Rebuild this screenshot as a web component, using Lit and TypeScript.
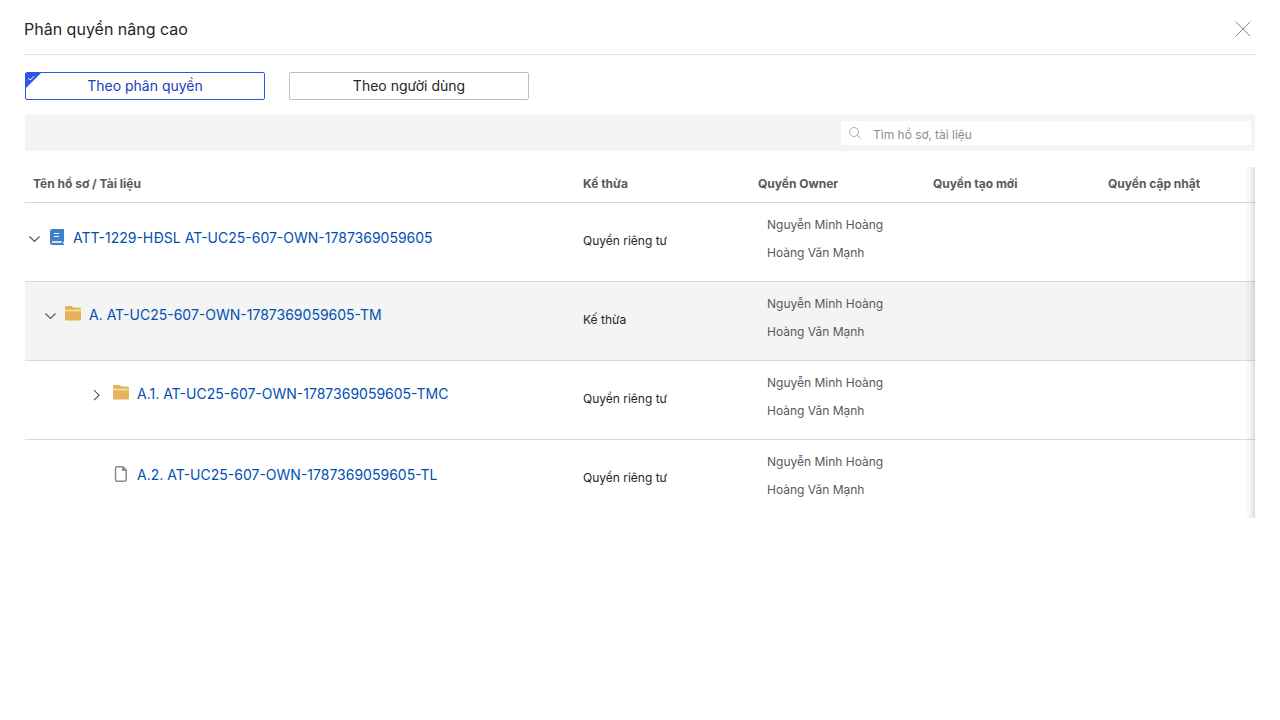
import { LitElement, html, css, svg, nothing } from "lit";
import { customElement, state } from "lit/decorators.js";
import { classMap } from "lit/directives/class-map.js";

type Kind = "book" | "folder" | "file";

interface Item {
  name: string;
  kind: Kind;
  level: number;
  expanded?: boolean;
  inherit: string;
  owners: string[];
  highlighted?: boolean;
}

const OWNERS = ["Nguyễn Minh Hoàng", "Hoàng Văn Mạnh"];

const ITEMS: Item[] = [
  { name: "ATT-1229-HĐSL AT-UC25-607-OWN-1787369059605", kind: "book", level: 0, expanded: true, inherit: "Quyền riêng tư", owners: OWNERS },
  { name: "A. AT-UC25-607-OWN-1787369059605-TM", kind: "folder", level: 1, expanded: true, inherit: "Kế thừa", owners: OWNERS, highlighted: true },
  { name: "A.1. AT-UC25-607-OWN-1787369059605-TMC", kind: "folder", level: 4, expanded: false, inherit: "Quyền riêng tư", owners: OWNERS },
  { name: "A.2. AT-UC25-607-OWN-1787369059605-TL", kind: "file", level: 4, inherit: "Quyền riêng tư", owners: OWNERS },
];

const ICONS = {
  book: svg`<path d="M3.500 0H14a1 1 0 0 1 1 1v11.500l-.7.5v1.700l.7.3v1H3.500A2.500 2.500 0 0 1 1 13.500v-11A2.500 2.500 0 0 1 3.500 0z" fill="#4080c8"/>
    <path d="M5 4.500h5M5 7.500h5" stroke="#fff"/><path d="M3.600 13h8.400" stroke="#fff" stroke-width="1.700" stroke-linecap="round"/>`,
  folder: svg`<path d="M1 1h5.500l2 1.500H15a1 1 0 0 1 1 1V14.600a1 1 0 0 1-1 1H1a1 1 0 0 1-1-1V2a1 1 0 0 1 1-1z" fill="#e6b35a"/>
    <path d="M0 5.500h16" stroke="#f4dcae" stroke-width="1.600"/>`,
  file: svg`<path d="M4 .75h6l3.250 3.250v9.750a1.500 1.500 0 0 1-1.500 1.500H4a1.500 1.500 0 0 1-1.500-1.500v-11.500A1.500 1.500 0 0 1 4 .75z" fill="#fff" stroke="#8a8a8a" stroke-width="1.500"/>
    <path d="M9 .500v4.500h4.500z" fill="#8a8a8a"/>`,
};

@customElement("app-root")
export class AppRoot extends LitElement {
  @state() private mode: "permission" | "user" = "permission";

  static styles = css`
    :host {
      display: block;
      padding: 0 24px;
      background: #fff;
      color: #262626;
      font: 12px/20px Inter, "Noto Sans", sans-serif;
      font-optical-sizing: none;
    }
    * { box-sizing: border-box; }
    svg { display: block; flex: none; }
    button { font: inherit; color: inherit; background: none; border: 0; padding: 0; cursor: pointer; }
    .header {
      display: flex;
      align-items: center;
      justify-content: space-between;
      padding: 16px 5px 12px 0;
      border-bottom: 1px solid #dfe3ec;
    }
    .title { margin: 0; font-size: 16px; line-height: 26px; font-weight: 400; }
    .body { padding: 17px 1px 0; }
    .modes { display: flex; gap: 24px; }
    .mode {
      position: relative;
      width: 240px;
      height: 28px;
      border: 1px solid #bfbfbf;
      border-radius: 2px;
      font-size: 14px;
      overflow: hidden;
    }
    .mode.active { border-color: #2f54eb; color: #1d39c4; }
    .mark { position: absolute; top: 0; left: 0; }
    .toolbar {
      display: flex;
      justify-content: flex-end;
      margin: 15px 0 16px;
      padding: 6px 4px;
      background: #f4f4f4;
    }
    .search {
      display: flex;
      align-items: center;
      gap: 12px;
      width: 410px;
      height: 24px;
      padding: 0 8px;
      border-radius: 2px;
      background: #fff;
    }
    .query { flex: 1; min-width: 0; height: 24px; border: 0; outline: 0; padding: 2px 0 0; font: inherit; background: none; }
    .query::placeholder { color: #8c8c8c; opacity: 1; }
    .frame { position: relative; overflow: hidden; }
    .frame::after {
      content: "";
      position: absolute;
      inset: 0 0 0 auto;
      width: 10px;
      background: linear-gradient(to right, rgba(0, 0, 0, 0), rgba(0, 0, 0, 0.04) 50%, rgba(0, 0, 0, 0.13));
      pointer-events: none;
    }
    .table { width: 100%; min-width: 1230px; table-layout: fixed; border-collapse: separate; border-spacing: 0; }
    .col-name { width: 550px; }
    .col { width: 175px; }
    th {
      padding: 7px 8px 8px;
      text-align: left;
      font-weight: 700;
      color: #595959;
      border-bottom: 1px solid #d9d9d9;
    }
    td { padding: 0 8px 2px; height: 79px; border-bottom: 1px solid #d9d9d9; }
    tr:last-child td { height: 78px; border-bottom: 0; }
    .highlighted { background: #f4f4f4; }
    td.name { vertical-align: top; padding: 0; }
    .node { display: flex; align-items: center; padding-top: 24px; line-height: 22px; }
    .node.folder { padding-top: 22px; }
    .toggle { width: 20px; height: 20px; padding: 4px; margin-top: 2px; }
    .spacer { width: 20px; }
    .kind { margin: 0 8px 2px 4px; }
    .folder .kind { margin-bottom: 4px; }
    .link { font-size: 14px; color: #0050b3; text-decoration: none; white-space: nowrap; }
    td.people { vertical-align: top; padding-bottom: 0; }
    .owners { list-style: none; margin: 0; padding: 8px 9px; color: #595959; line-height: 28px; }
  `;

  private renderMode(id: "permission" | "user", label: string) {
    const active = this.mode === id;
    return html`<button
      class=${classMap({ mode: true, active })}
      aria-pressed=${active}
      @click=${() => (this.mode = id)}
    >
      ${active
        ? html`<svg class="mark" width="15" height="15" viewBox="0 0 15 15">
            <path d="M0 0h15L0 15z" fill="#2f54eb" />
            <path d="M2.200 5l2 2 3.800-3.800" fill="none" stroke="#fff" />
          </svg>`
        : nothing}
      ${label}
    </button>`;
  }

  private renderRow(item: Item) {
    const indent = item.level * 16;
    return html`<tr class=${classMap({ highlighted: !!item.highlighted })}>
      <td class="name">
        <div class="node ${item.kind}" style="padding-left:${indent}px">
          ${item.expanded === undefined
            ? html`<span class="spacer"></span>`
            : html`<button class="toggle" aria-expanded=${item.expanded} aria-label=${item.name}>
                <svg width="12" height="12" viewBox="0 0 12 12" fill="none" stroke="#505050" stroke-width="1.100">
                  <path d=${item.expanded ? "M.5 3.500 5.500 8.500 10.500 3.500" : "M1 1.200 6 6.200 1 11.200"} />
                </svg>
              </button>`}
          <svg class="kind" width="16" height="16" viewBox="0 0 16 16">${ICONS[item.kind]}</svg>
          <a class="link" href="#">${item.name}</a>
        </div>
      </td>
      <td>${item.inherit}</td>
      <td class="people"><ul class="owners">${item.owners.map((o) => html`<li>${o}</li>`)}</ul></td>
      <td></td>
      <td></td>
    </tr>`;
  }

  render() {
    return html`
      <header class="header">
        <h1 class="title">Phân quyền nâng cao</h1>
        <button aria-label="Đóng">
          <svg width="16" height="16" viewBox="0 0 16 16" fill="none" stroke="#888">
            <path d="M.7.7l14.600 14.600M15.300.7L.7 15.300" />
          </svg>
        </button>
      </header>
      <main class="body">
        <div class="modes">
          ${this.renderMode("permission", "Theo phân quyền")} ${this.renderMode("user", "Theo người dùng")}
        </div>
        <div class="toolbar">
          <label class="search">
            <svg width="12" height="12" viewBox="0 0 12 12" fill="none" stroke="#b0b0b0">
              <circle cx="5" cy="5" r="4.500" />
              <path d="M8.200 8.200l3.500 3.500" />
            </svg>
            <input class="query" type="text" placeholder="Tìm hồ sơ, tài liệu" aria-label="Tìm hồ sơ, tài liệu" />
          </label>
        </div>
        <div class="frame">
          <table class="table">
            <colgroup>
              <col class="col-name" /><col class="col" /><col class="col" /><col class="col" /><col />
            </colgroup>
            <thead>
              <tr>
                <th>Tên hồ sơ / Tài liệu</th>
                <th>Kế thừa</th>
                <th>Quyền Owner</th>
                <th>Quyền tạo mới</th>
                <th>Quyền cập nhật</th>
              </tr>
            </thead>
            <tbody>${ITEMS.map((i) => this.renderRow(i))}</tbody>
          </table>
        </div>
      </main>
    `;
  }
}
